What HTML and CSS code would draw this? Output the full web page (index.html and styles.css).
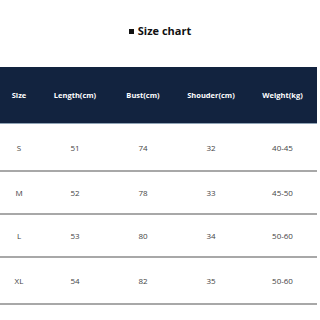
FILE: index.html
```html
<!DOCTYPE html>
<html>
<head>
<meta charset="utf-8">
<link rel="stylesheet" href="styles.css">
</head>
<body>
<div class="page">
  <h1 class="title"><span class="sq"></span>Size chart</h1>
  <table class="chart">
    <colgroup>
      <col class="c1"><col class="c2"><col class="c3"><col class="c4"><col class="c5">
    </colgroup>
    <thead>
      <tr><th>Size</th><th>Length(cm)</th><th>Bust(cm)</th><th>Shouder(cm)</th><th>Weight(kg)</th></tr>
    </thead>
    <tbody>
      <tr class="r1"><td>S</td><td>51</td><td>74</td><td>32</td><td>40-45</td></tr>
      <tr class="r2"><td>M</td><td>52</td><td>78</td><td>33</td><td>45-50</td></tr>
      <tr class="r3"><td>L</td><td>53</td><td>80</td><td>34</td><td>50-60</td></tr>
      <tr class="r4"><td>XL</td><td>54</td><td>82</td><td>35</td><td>50-60</td></tr>
    </tbody>
  </table>
</div>
</body>
</html>
```

FILE: styles.css
```css
html, body {
  margin: 0;
  padding: 0;
  background: #ffffff;
}
.page {
  width: 320px;
  height: 320px;
  overflow: hidden;
  font-family: "Open Sans", "Liberation Sans", sans-serif;
}
.title {
  margin: 0;
  height: 67px;
  padding-top: 22px;
  box-sizing: border-box;
  text-align: center;
  font-size: 11px;
  font-weight: 700;
  color: #111;
  line-height: 18px;
}
.sq {
  display: inline-block;
  width: 5px;
  height: 5px;
  background: #111;
  margin-right: 4px;
  vertical-align: 1px;
}
.chart {
  width: 317px;
  border-collapse: collapse;
  table-layout: fixed;
}
.c1 { width: 38px; }
.c2 { width: 74px; }
.c3 { width: 62px; }
.c4 { width: 74px; }
.c5 { width: 69px; }
.chart th {
  background: #12233f;
  color: #ffffff;
  font-size: 7.5px;
  font-weight: 700;
  height: 56px;
  padding: 0;
  text-align: center;
  border-bottom: 1px solid #8fa3b5;
}
.chart td {
  font-size: 8px;
  color: #444;
  text-align: center;
  padding: 0;
  border-bottom: 2px solid #a8a8a8;
}
.r1 td { height: 46px; }
.r2 td { height: 41px; }
.r3 td { height: 41px; }
.r4 td { height: 45px; }
```
